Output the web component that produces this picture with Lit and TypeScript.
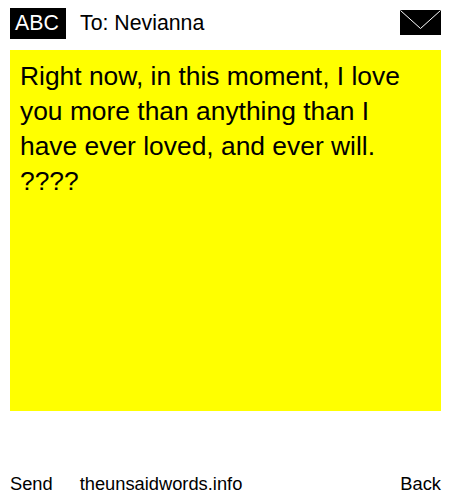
import { LitElement, html, css } from "lit";
import { customElement } from "lit/decorators.js";

@customElement("app-root")
export class AppRoot extends LitElement {
  static styles = css`
    :host {
      display: block;
      width: 450px;
      height: 500px;
      background: #fff;
      color: #000;
      font-family: "Liberation Sans", Arial, sans-serif;
      box-sizing: border-box;
      padding: 8px 9px 0 10px;
    }
    .top {
      display: flex;
      align-items: flex-start;
      height: 31px;
    }
    .abc {
      width: 54px;
      padding-right: 2px;
      height: 31px;
      background: #000;
      color: #fff;
      font-size: 21.3px;
      line-height: 30px;
      text-align: center;
    }
    .to {
      margin-left: 14px;
      font-size: 21.3px;
      line-height: 30px;
      flex: 1;
    }
    .env {
      display: block;
      width: 41px;
      height: 25px;
      margin-top: 2px;
    }
    .msg {
      margin-top: 11px;
      height: 361px;
      background: #ff0;
      box-sizing: border-box;
      padding: 9px 10px;
      font-size: 26.4px;
      line-height: 35px;
    }
    .foot {
      margin-top: 60px;
      display: flex;
      font-size: 18.3px;
      line-height: 26px;
    }
    .site {
      margin-left: 27px;
      flex: 1;
    }
  `;

  render() {
    return html`
      <div class="top">
        <div class="abc">ABC</div>
        <div class="to">To: Nevianna</div>
        <svg class="env" viewBox="0 0 41 25" shape-rendering="crispEdges">
          <rect width="41" height="25" fill="#000"></rect>
          <path d="M0.5 0.5 L20.5 18.5 L40.5 0.5" fill="none" stroke="#fff" stroke-width="1" shape-rendering="auto"></path>
        </svg>
      </div>
      <div class="msg">Right now, in this moment, I love you more than anything than I have ever loved, and ever will. ????</div>
      <div class="foot">
        <span>Send</span>
        <span class="site">theunsaidwords.info</span>
        <span>Back</span>
      </div>
    `;
  }
}
